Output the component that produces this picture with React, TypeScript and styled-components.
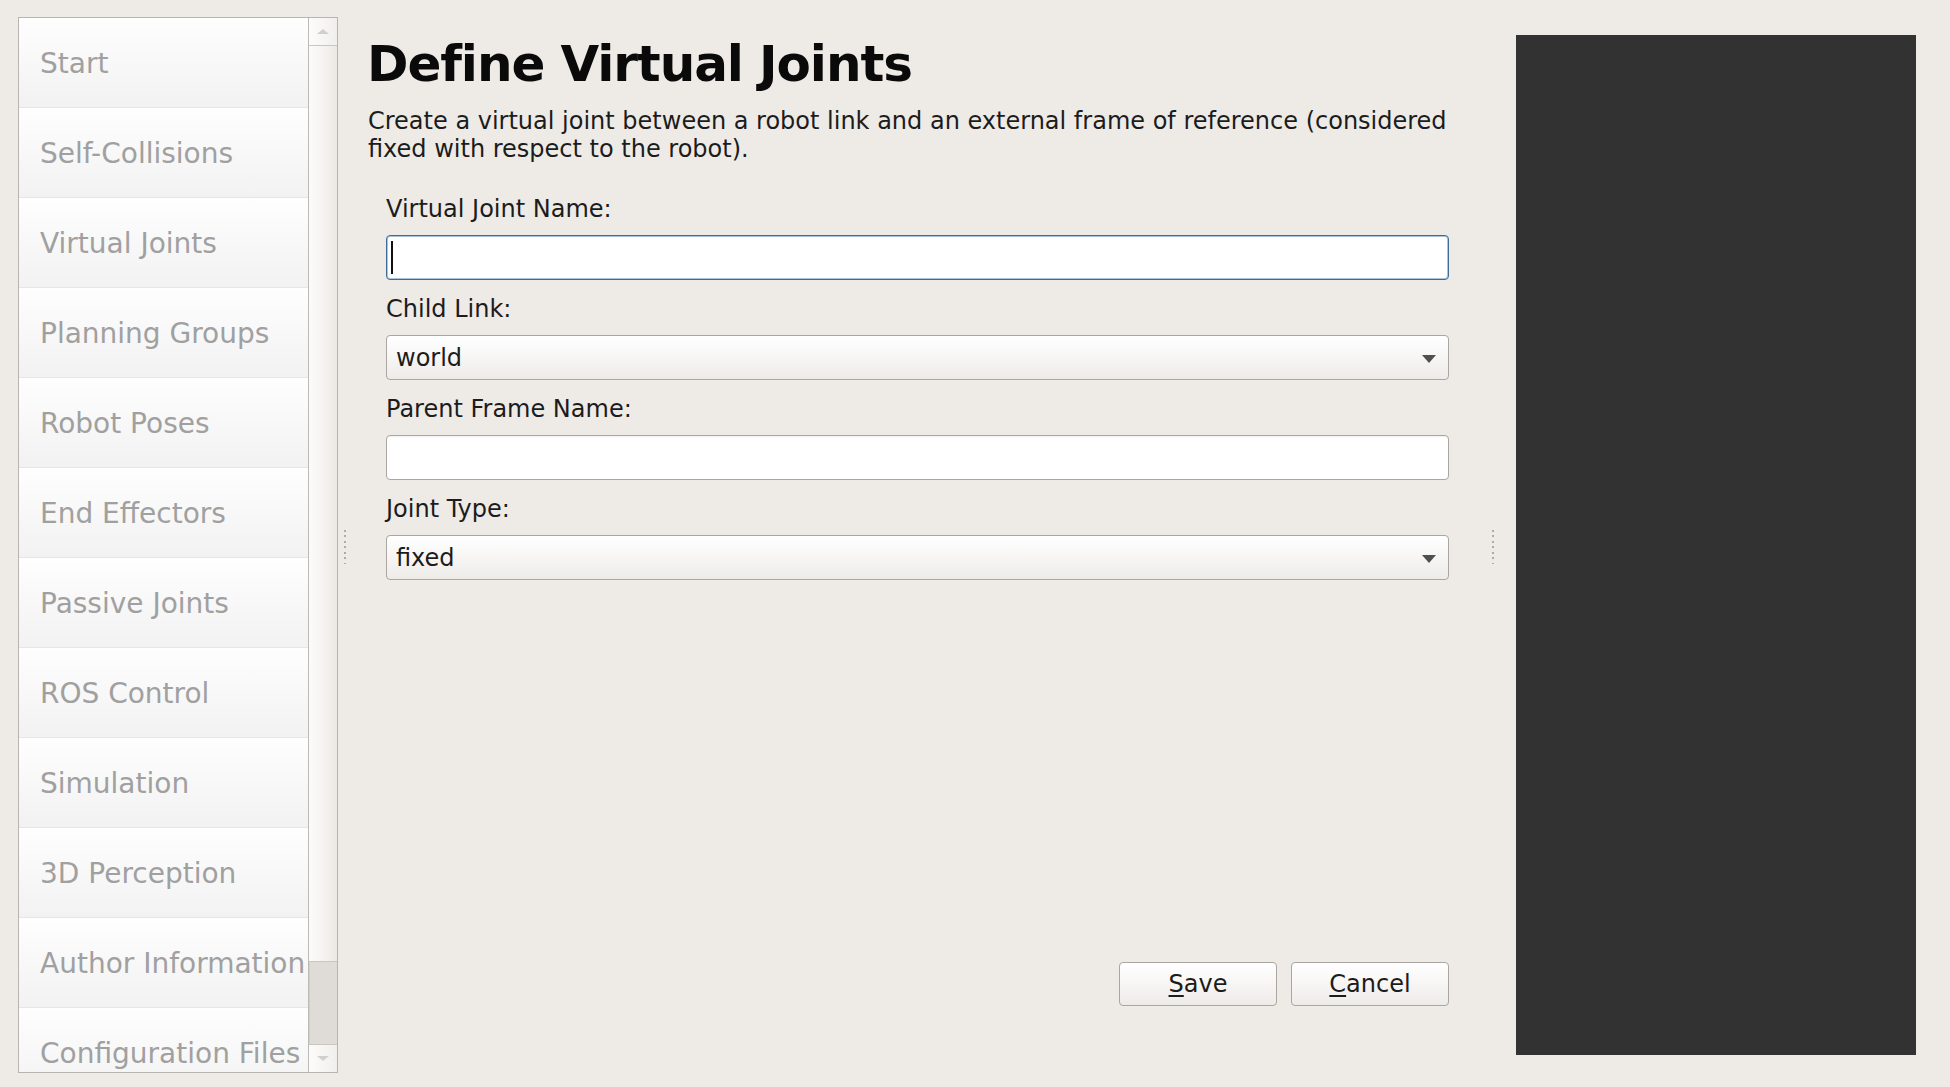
import React from "react";
import styled, { createGlobalStyle } from "styled-components";

const Global = createGlobalStyle`
  html, body { margin: 0; padding: 0; background: #eeebe7; }
  body { font-family: "DejaVu Sans", "Liberation Sans", sans-serif; }
  * { box-sizing: border-box; }
`;

const Page = styled.div`
  display: flex;
  width: 1950px;
  height: 1087px;
  overflow: hidden;
  background: #eeebe7;
  font-family: "DejaVu Sans", sans-serif;
`;

const SideArea = styled.div`
  padding: 17px 0 0 18px;
  flex: none;
`;

const SideBox = styled.div`
  width: 320px;
  height: 1056px;
  border: 1px solid #b8b5b0;
  display: flex;
  background: #fff;
`;

const NavList = styled.div`
  width: 289px;
  overflow: hidden;
  display: flex;
  flex-direction: column;
`;

const NavItem = styled.div`
  flex: none;
  height: 90px;
  padding: 2px 0 0 21px;
  line-height: 87px;
  font-size: 28px;
  color: #a0a0a0;
  white-space: nowrap;
  background: linear-gradient(to bottom, #fefefe 0%, #f2f2f2 100%);
  border-bottom: 1px solid #e6e6e6;
`;

const ScrollBar = styled.div`
  width: 29px;
  border-left: 1px solid #bdbab5;
  display: flex;
  flex-direction: column;
  background: linear-gradient(to right, #fcfbfa 0%, #f4f2ef 60%, #ebe8e4 100%);
`;

const ScrollBtn = styled.div<{ $down?: boolean }>`
  height: 28px;
  flex: none;
  display: flex;
  align-items: center;
  justify-content: center;
  ${(p) => (p.$down ? "border-top: 1px solid #c9c6c1;" : "border-bottom: 1px solid #c9c6c1;")}
  background: linear-gradient(to right, #fdfcfb, #f1efec);
`;

const ScrollArrow = styled.div<{ $down?: boolean }>`
  width: 0;
  height: 0;
  border-left: 6px solid transparent;
  border-right: 6px solid transparent;
  ${(p) =>
    p.$down ? "border-top: 5px solid #d2d0cc;" : "border-bottom: 5px solid #d2d0cc;"}
`;

const Track = styled.div`
  flex: 1;
  display: flex;
  flex-direction: column;
  justify-content: flex-end;
`;

const Thumb = styled.div`
  height: 83px;
  background: #dfdcd8;
  border-top: 1px solid #c9c6c1;
  border-left: 1px solid #d3d0cb;
`;

const Splitter = styled.div<{ $w: number; $pl: number }>`
  flex: none;
  width: ${(p) => p.$w}px;
  padding-left: ${(p) => p.$pl}px;
  padding-top: 7px;
  display: flex;
  align-items: center;
`;

const Dots = styled.div`
  width: 2px;
  height: 34px;
  background: repeating-linear-gradient(
    to bottom,
    #aeaba6 0px,
    #aeaba6 2px,
    transparent 2px,
    transparent 5.5px
  );
`;

const Content = styled.div`
  flex: none;
  width: 1082px;
  display: flex;
  flex-direction: column;
  padding: 35px 0 81px 0;
  color: #1c1c1c;
`;

const Title = styled.h1`
  margin: 0;
  font-size: 50px;
  letter-spacing: -1.1px;
  line-height: 58px;
  font-weight: bold;
  color: #0a0a0a;
`;

const Desc = styled.p`
  margin: 14px 0 0 1px;
  font-size: 24px;
  line-height: 28px;
  color: #1c1c1c;
`;

const Form = styled.div`
  margin: 32px 0 0 19px;
  display: flex;
  flex-direction: column;
  gap: 15px;
`;

const Group = styled.div`
  display: flex;
  flex-direction: column;
  gap: 12px;
`;

const Label = styled.div`
  font-size: 24px;
  line-height: 28px;
  color: #1c1c1c;
`;

const TextField = styled.div<{ $focus?: boolean }>`
  height: 45px;
  border-radius: 4px;
  background: #fff;
  border: 1px solid ${(p) => (p.$focus ? "#3b6d98" : "#aaa7a2")};
  box-shadow: ${(p) => (p.$focus ? "inset 0 0 0 1px #a9c3dc" : "inset 0 1px 1px rgba(0,0,0,0.06)")};
  display: flex;
  align-items: center;
  padding-left: 4px;
`;

const Caret = styled.div`
  width: 2px;
  height: 33px;
  background: #111;
`;

const Combo = styled.div`
  height: 45px;
  border-radius: 4px;
  border: 1px solid #aaa7a2;
  background: linear-gradient(to bottom, #ffffff 0%, #f8f7f6 45%, #ecebe8 100%);
  display: flex;
  align-items: center;
  justify-content: space-between;
  padding: 0 12px 0 9px;
  font-size: 24px;
  color: #1c1c1c;
`;

const ComboArrow = styled.div`
  width: 0;
  height: 0;
  border-left: 7px solid transparent;
  border-right: 7px solid transparent;
  border-top: 8px solid #505050;
  margin-top: 2px;
`;

const ButtonRow = styled.div`
  margin-top: auto;
  display: flex;
  justify-content: flex-end;
  gap: 14px;
`;

const Button = styled.button`
  width: 158px;
  height: 44px;
  border: 1px solid #aaa7a2;
  border-radius: 4px;
  background: linear-gradient(to bottom, #ffffff 0%, #f7f6f5 50%, #edebe8 100%);
  font-family: "DejaVu Sans", sans-serif;
  font-size: 24px;
  color: #1c1c1c;
  padding: 0;
  cursor: default;
  u {
    text-decoration-thickness: 2px;
    text-underline-offset: 3px;
  }
`;

const Viewer = styled.div`
  flex: none;
  width: 400px;
  height: 1020px;
  margin-top: 35px;
  background: #323232;
`;

const items = [
  "Start",
  "Self-Collisions",
  "Virtual Joints",
  "Planning Groups",
  "Robot Poses",
  "End Effectors",
  "Passive Joints",
  "ROS Control",
  "Simulation",
  "3D Perception",
  "Author Information",
  "Configuration Files",
];

export default function App() {
  return (
    <Page>
      <Global />
      <SideArea>
        <SideBox>
          <NavList>
            {items.map((it) => (
              <NavItem key={it}>{it}</NavItem>
            ))}
          </NavList>
          <ScrollBar>
            <ScrollBtn>
              <ScrollArrow />
            </ScrollBtn>
            <Track>
              <Thumb />
            </Track>
            <ScrollBtn $down>
              <ScrollArrow $down />
            </ScrollBtn>
          </ScrollBar>
        </SideBox>
      </SideArea>
      <Splitter $w={29} $pl={6}>
        <Dots />
      </Splitter>
      <Content>
        <Title>Define Virtual Joints</Title>
        <Desc>
          Create a virtual joint between a robot link and an external frame of reference (considered
          fixed with respect to the robot).
        </Desc>
        <Form>
          <Group>
            <Label>Virtual Joint Name:</Label>
            <TextField $focus>
              <Caret />
            </TextField>
          </Group>
          <Group>
            <Label>Child Link:</Label>
            <Combo>
              <span>world</span>
              <ComboArrow />
            </Combo>
          </Group>
          <Group>
            <Label>Parent Frame Name:</Label>
            <TextField />
          </Group>
          <Group>
            <Label>Joint Type:</Label>
            <Combo>
              <span>fixed</span>
              <ComboArrow />
            </Combo>
          </Group>
        </Form>
        <ButtonRow>
          <Button>
            <u>S</u>ave
          </Button>
          <Button>
            <u>C</u>ancel
          </Button>
        </ButtonRow>
      </Content>
      <Splitter $w={67} $pl={43}>
        <Dots />
      </Splitter>
      <Viewer />
    </Page>
  );
}
